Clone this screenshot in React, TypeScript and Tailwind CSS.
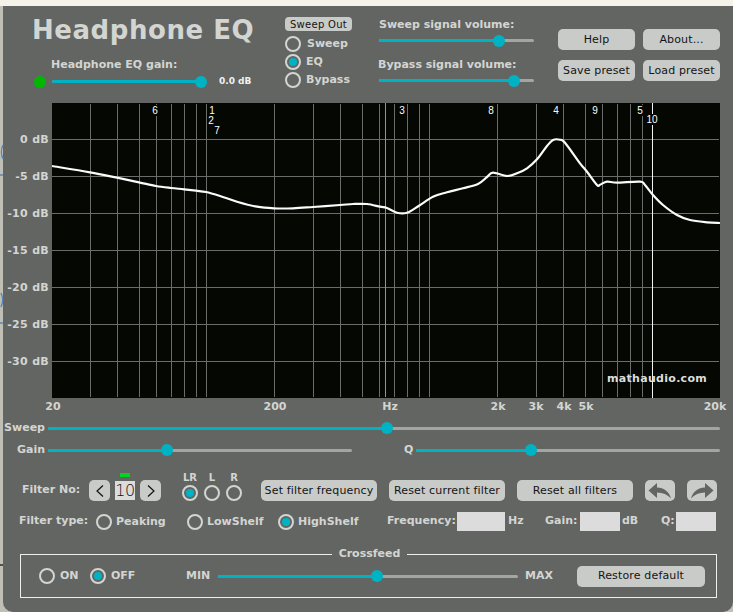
import type { ReactNode } from 'react';

const panelFont = { fontFamily: '"DejaVu Sans", Verdana, sans-serif' };
const markerFont = { fontFamily: '"Liberation Sans", Arial, sans-serif' };

const gridX = [
  90, 117, 139, 156, 171, 184, 196, 206, 274, 313, 340, 362, 379, 394, 407, 419, 429, 497, 536, 563,
  585, 602, 617, 630, 642,
];
const gridY = [139, 176, 213, 250, 287, 324, 361];
const dbLabels = ['0 dB', '-5 dB', '-10 dB', '-15 dB', '-20 dB', '-25 dB', '-30 dB'];

const curve: [number, number][] = [
  [52, 166], [90, 172.3], [117, 177.7], [139, 182.3], [156, 186], [171, 188], [184, 189.3], [196, 190.7],
  [206, 192], [220, 196], [237, 201.7], [257, 206.7], [274, 208.3], [293, 208.3], [313, 207], [340, 205],
  [353, 204], [367, 204], [380, 206.7], [387, 208], [397, 212.7], [407, 212.7], [419, 205.7], [433, 196.7],
  [447, 192.3], [463, 188.3], [478, 184], [487, 177], [493, 172.7], [507, 176], [517, 173.3], [527, 168.3],
  [537, 159.3], [547, 146], [553, 140], [560, 139.7], [565, 142.7], [580, 163.3], [587, 171.7], [597, 185],
  [600, 184.7], [607, 181.7], [617, 182.7], [640, 181.7], [645, 185], [653, 195], [663, 205], [677, 215],
  [690, 220], [707, 222.3], [720, 223],
];

// catmull-rom through the measured points, the real curve has no corners
function smoothPath(pts: [number, number][]) {
  let d = `M${pts[0][0]} ${pts[0][1]}`;
  for (let i = 0; i < pts.length - 1; i++) {
    const p0 = pts[Math.max(i - 1, 0)];
    const p1 = pts[i];
    const p2 = pts[i + 1];
    const p3 = pts[Math.min(i + 2, pts.length - 1)];
    const c1x = p1[0] + (p2[0] - p0[0]) / 6;
    const c1y = p1[1] + (p2[1] - p0[1]) / 6;
    const c2x = p2[0] - (p3[0] - p1[0]) / 6;
    const c2y = p2[1] - (p3[1] - p1[1]) / 6;
    d += ` C${c1x} ${c1y} ${c2x} ${c2y} ${p2[0]} ${p2[1]}`;
  }
  return d;
}

// filter markers along the top of the plot
const markers = [
  { n: '6', x: 155, y: 110 },
  { n: '1', x: 212, y: 110 },
  { n: '2', x: 211, y: 120 },
  { n: '7', x: 217, y: 130 },
  { n: '3', x: 402, y: 110 },
  { n: '8', x: 491, y: 110 },
  { n: '4', x: 556, y: 110 },
  { n: '9', x: 595, y: 110 },
  { n: '5', x: 640, y: 110 },
  { n: '10', x: 652, y: 119 },
];

const freqLabels = [
  { t: '20', x: 53 },
  { t: '200', x: 275 },
  { t: 'Hz', x: 390 },
  { t: '2k', x: 498 },
  { t: '3k', x: 536 },
  { t: '4k', x: 564 },
  { t: '5k', x: 586 },
  { t: '20k', x: 715 },
];

function Slider({ value, className }: { value: number; className: string }) {
  return (
    <div className={`relative h-[3px] shrink-0 rounded-full bg-[#a3a5a2] ${className}`}>
      <div className="h-full rounded-full bg-[#00b3c4]" style={{ width: `${value}%` }} />
      <div
        className="absolute top-1/2 h-3 w-3 -translate-x-1/2 -translate-y-1/2 rounded-full bg-[#00b3c4]"
        style={{ left: `${value}%` }}
      />
    </div>
  );
}

function Radio({ on, label, className = '' }: { on?: boolean; label?: string; className?: string }) {
  return (
    <div className={`flex shrink-0 items-center ${className}`}>
      <span className="flex h-4 w-4 shrink-0 items-center justify-center rounded-full border-2 border-[#d3d5d2]">
        {on && <span className="h-2 w-2 rounded-full bg-[#00b3c4]" />}
      </span>
      {label && <span className="text-[11px] leading-4 font-bold text-[#d3d5d2]">{label}</span>}
    </div>
  );
}

function Btn({ children, className }: { children: ReactNode; className: string }) {
  return (
    <button
      className={`flex h-[21px] shrink-0 items-center justify-center rounded-[5px] bg-[#c9cbc8] pt-px text-[11px] tracking-[0.15px] whitespace-nowrap text-[#141414] ${className}`}
    >
      {children}
    </button>
  );
}

function Chart() {
  return (
    <div className="relative ml-[49px] h-[295px] w-[668px] bg-[#040702]">
      <svg className="absolute inset-0" width="668" height="295" viewBox="52 103 668 295">
        {gridY.map((y) => (
          <line key={y} x1="52" x2="719" y1={y + 0.5} y2={y + 0.5} stroke="#6b6d6a" />
        ))}
        {gridX.map((x) => (
          <line key={x} x1={x + 0.5} x2={x + 0.5} y1="104" y2="397" stroke="#6b6d6a" />
        ))}
        <line x1="385.5" x2="385.5" y1="103" y2="397" stroke="#35d635" />
        <line x1="652.5" x2="652.5" y1="103" y2="398" stroke="#f4f4f4" />
        <path d={smoothPath(curve)} fill="none" stroke="#fbfbfb" strokeWidth="2.2" strokeLinejoin="round" />
      </svg>
      {markers.map((m) => (
        <span
          key={m.n}
          className="absolute -translate-x-1/2 bg-[#040702] px-px text-[10px] leading-[11px] text-white"
          style={{ ...markerFont, left: m.x - 52, top: m.y - 103 - 5 }}
        >
          {m.n}
        </span>
      ))}
      <span className="absolute bottom-[12px] left-[555px] text-[11px] leading-[14px] font-bold tracking-[0.3px] text-[#dcdedb]">
        mathaudio.com
      </span>
    </div>
  );
}

export default function App() {
  return (
    <div className="relative h-[612px] w-[733px] overflow-hidden bg-[#f5f2ea]" style={panelFont}>
      <div className="h-[6px]" />
      <div className="flex h-[606px] bg-[#bfbfb6]">
        <div className="w-[3px] shrink-0" />
        <div className="h-[606px] w-[730px] rounded-b-[10px] bg-[#636562] text-[#d3d5d2]">
          {/* Top controls */}
          <div className="flex h-[97px] items-start">
            <div className="ml-[29px] w-[253px] shrink-0">
              <h1 className="mt-[7px] text-[26px] leading-[35px] font-bold tracking-[0.55px] text-[#d3d5d2]">
                Headphone EQ
              </h1>
              <p className="mt-[10px] ml-[19px] text-[11px] leading-[14px] font-bold">Headphone EQ gain:</p>
              <div className="mt-[3px] flex items-center">
                <span className="ml-[2px] h-3 w-3 shrink-0 rounded-full bg-[#00b800]" />
                <Slider value={100} className="ml-[6px] w-[149px]" />
                <span className="ml-[18px] text-[9px] font-bold text-[#f1f1f1]">0.0 dB</span>
              </div>
            </div>
            <div className="mt-[11px] w-[94px] shrink-0">
              <div className="flex h-[14px] w-[67px] items-center justify-center rounded-[4px] bg-[#c9cbc8] text-[10px] tracking-[0.3px] text-[#141414]">
                Sweep Out
              </div>
              <div className="mt-[5px] flex flex-col gap-[2px]">
                <Radio label="Sweep" className="gap-[6px]" />
                <Radio on label="EQ" className="gap-[5px]" />
                <Radio label="Bypass" className="gap-[5px]" />
              </div>
            </div>
            <div className="mt-[12px] w-[155px] shrink-0">
              <p className="text-[11px] leading-[14px] font-bold">Sweep signal volume:</p>
              <Slider value={77.5} className="mt-[7px]" />
              <p className="mt-[16px] -ml-px text-[11px] leading-[14px] font-bold">Bypass signal volume:</p>
              <Slider value={87} className="mt-[7px]" />
            </div>
            <div className="mt-[23px] ml-[24px] grid grid-cols-[77px_77px] gap-x-[8px] gap-y-[10px]">
              <Btn className="w-[77px]">Help</Btn>
              <Btn className="w-[77px]">About...</Btn>
              <Btn className="w-[77px]">Save preset</Btn>
              <Btn className="w-[77px]">Load preset</Btn>
            </div>
          </div>

          {/* Plot with axes */}
          <div className="relative">
            <div className="absolute top-[18px] left-0 flex w-[46px] flex-col items-end">
              {dbLabels.map((d) => (
                <span key={d} className="h-[37px] text-[11px] leading-[37px] font-bold tracking-[0.3px]">
                  {d}
                </span>
              ))}
            </div>
            <Chart />
          </div>
          <div className="relative h-[23px]">
            {freqLabels.map((f) => (
              <span
                key={f.t}
                className="absolute top-[2px] -translate-x-1/2 text-[11px] leading-[14px] font-bold"
                style={{ left: f.x - 3 }}
              >
                {f.t}
              </span>
            ))}
          </div>

          {/* Sweep, gain and Q */}
          <div className="flex h-[14px] items-center">
            <span className="w-[42px] text-right text-[11px] font-bold">Sweep</span>
            <Slider value={50.4} className="ml-[3px] w-[672px]" />
          </div>
          <div className="mt-[8px] flex h-[14px] items-center">
            <span className="w-[42px] text-right text-[11px] font-bold">Gain</span>
            <Slider value={39} className="ml-[3px] w-[304px]" />
            <span className="ml-[52px] w-[8px] text-[11px] font-bold">Q</span>
            <Slider value={37.8} className="ml-[4px] w-[304px]" />
          </div>

          {/* Filter selection */}
          <div className="mt-[10px] flex h-[34px] items-end">
            <span className="mb-[3px] ml-[19px] w-[67px] shrink-0 text-[11px] font-bold">Filter No:</span>
            <button className="flex h-[21px] w-[21px] shrink-0 items-center justify-center rounded-[5px] bg-[#c9cbc8]">
              <svg width="10" height="14" viewBox="0 0 10 14" fill="none" stroke="#111" strokeWidth="1.2">
                <path d="M8 1.5 2 7l6 5.5" />
              </svg>
            </button>
            <div className="relative mb-px ml-[5px] flex h-[19px] w-[20px] shrink-0 items-center justify-center bg-[#dcdcdc] text-[16px] font-extralight tracking-[-0.5px] text-[#111]">
              <span className="absolute -top-[8px] left-[5px] h-[4px] w-[10px] bg-[#00d420]" />
              10
            </div>
            <button className="ml-[5px] flex h-[21px] w-[21px] shrink-0 items-center justify-center rounded-[5px] bg-[#c9cbc8]">
              <svg width="10" height="14" viewBox="0 0 10 14" fill="none" stroke="#111" strokeWidth="1.2">
                <path d="M2 1.5 8 7l-6 5.5" />
              </svg>
            </button>
            <div className="ml-[21px] grid shrink-0 grid-cols-[16px_16px_16px] gap-x-[6px]">
              {['LR', 'L', 'R'].map((c) => (
                <span key={c} className="text-center text-[10px] leading-[15px] font-bold">
                  {c}
                </span>
              ))}
              <Radio on />
              <Radio />
              <Radio />
            </div>
            <Btn className="ml-[19px] w-[116px]">Set filter frequency</Btn>
            <Btn className="ml-[12px] w-[116px]">Reset current filter</Btn>
            <Btn className="ml-[12px] w-[116px]">Reset all filters</Btn>
            <Btn className="ml-[12px] w-[30px]">
              <svg width="24" height="16" viewBox="0 0 24 16" fill="#636562">
                <path d="M.5 7.5 9 0v4.5c7 0 12 4 14 11-3.5-4-8-6-14-6V15z" />
              </svg>
            </Btn>
            <Btn className="ml-[12px] w-[30px]">
              <svg width="24" height="16" viewBox="0 0 24 16" fill="#636562">
                <path d="M23.5 7.5 15 0v4.500c-7 0-12 4-14 11 3.500-4 8-6 14-6V15z" />
              </svg>
            </Btn>
          </div>

          {/* Filter parameters */}
          <div className="mt-[11px] flex h-[19px] items-center text-[11px] font-bold">
            <span className="ml-[16px] w-[77px] shrink-0 whitespace-nowrap">Filter type:</span>
            <Radio label="Peaking" className="w-[91px] gap-[4px]" />
            <Radio label="LowShelf" className="w-[91px] gap-[4px]" />
            <Radio on label="HighShelf" className="w-[109px] gap-[4px]" />
            <span className="w-[70px] shrink-0">Frequency:</span>
            <div className="h-[19px] w-[48px] shrink-0 bg-[#dcdcdc]" />
            <span className="ml-[3px] w-[37px] shrink-0">Hz</span>
            <span className="w-[35px] shrink-0">Gain:</span>
            <div className="h-[19px] w-[40px] shrink-0 bg-[#dcdcdc]" />
            <span className="ml-[2px] w-[39px] shrink-0">dB</span>
            <span className="w-[15px] shrink-0">Q:</span>
            <div className="h-[19px] w-[40px] shrink-0 bg-[#dcdcdc]" />
          </div>

          {/* Crossfeed */}
          <div className="relative mt-[23px] ml-[17px] flex h-[44px] w-[697px] items-center border border-[#eeeeee]">
            <span className="absolute -top-[8px] left-[311px] w-[75px] bg-[#636562] text-center text-[11px] leading-[14px] font-bold">
              Crossfeed
            </span>
            <Radio label="ON" className="ml-[18px] w-[51px] gap-[5px]" />
            <Radio on label="OFF" className="w-[96px] gap-[5px]" />
            <span className="w-[32px] shrink-0 text-[11px] font-bold">MIN</span>
            <Slider value={53} className="w-[300px]" />
            <span className="ml-[7px] w-[52px] shrink-0 text-[11px] font-bold">MAX</span>
            <Btn className="w-[128px]">Restore default</Btn>
          </div>
        </div>
      </div>

      {/* bits of the window behind, peeking past the left edge */}
      <svg className="absolute top-0 left-0" width="6" height="612" fill="none" stroke="#5b86b3" strokeWidth="1.500">
        <path d="M3 145c-2 4-2 10 0 14" />
        <path d="M0 175h3" />
        <path d="M1 293c2 4 2 10 0 14" />
        <path d="M0 323h3" />
        <path d="M0 565h3" stroke="#2c2c2c" />
      </svg>
    </div>
  );
}
